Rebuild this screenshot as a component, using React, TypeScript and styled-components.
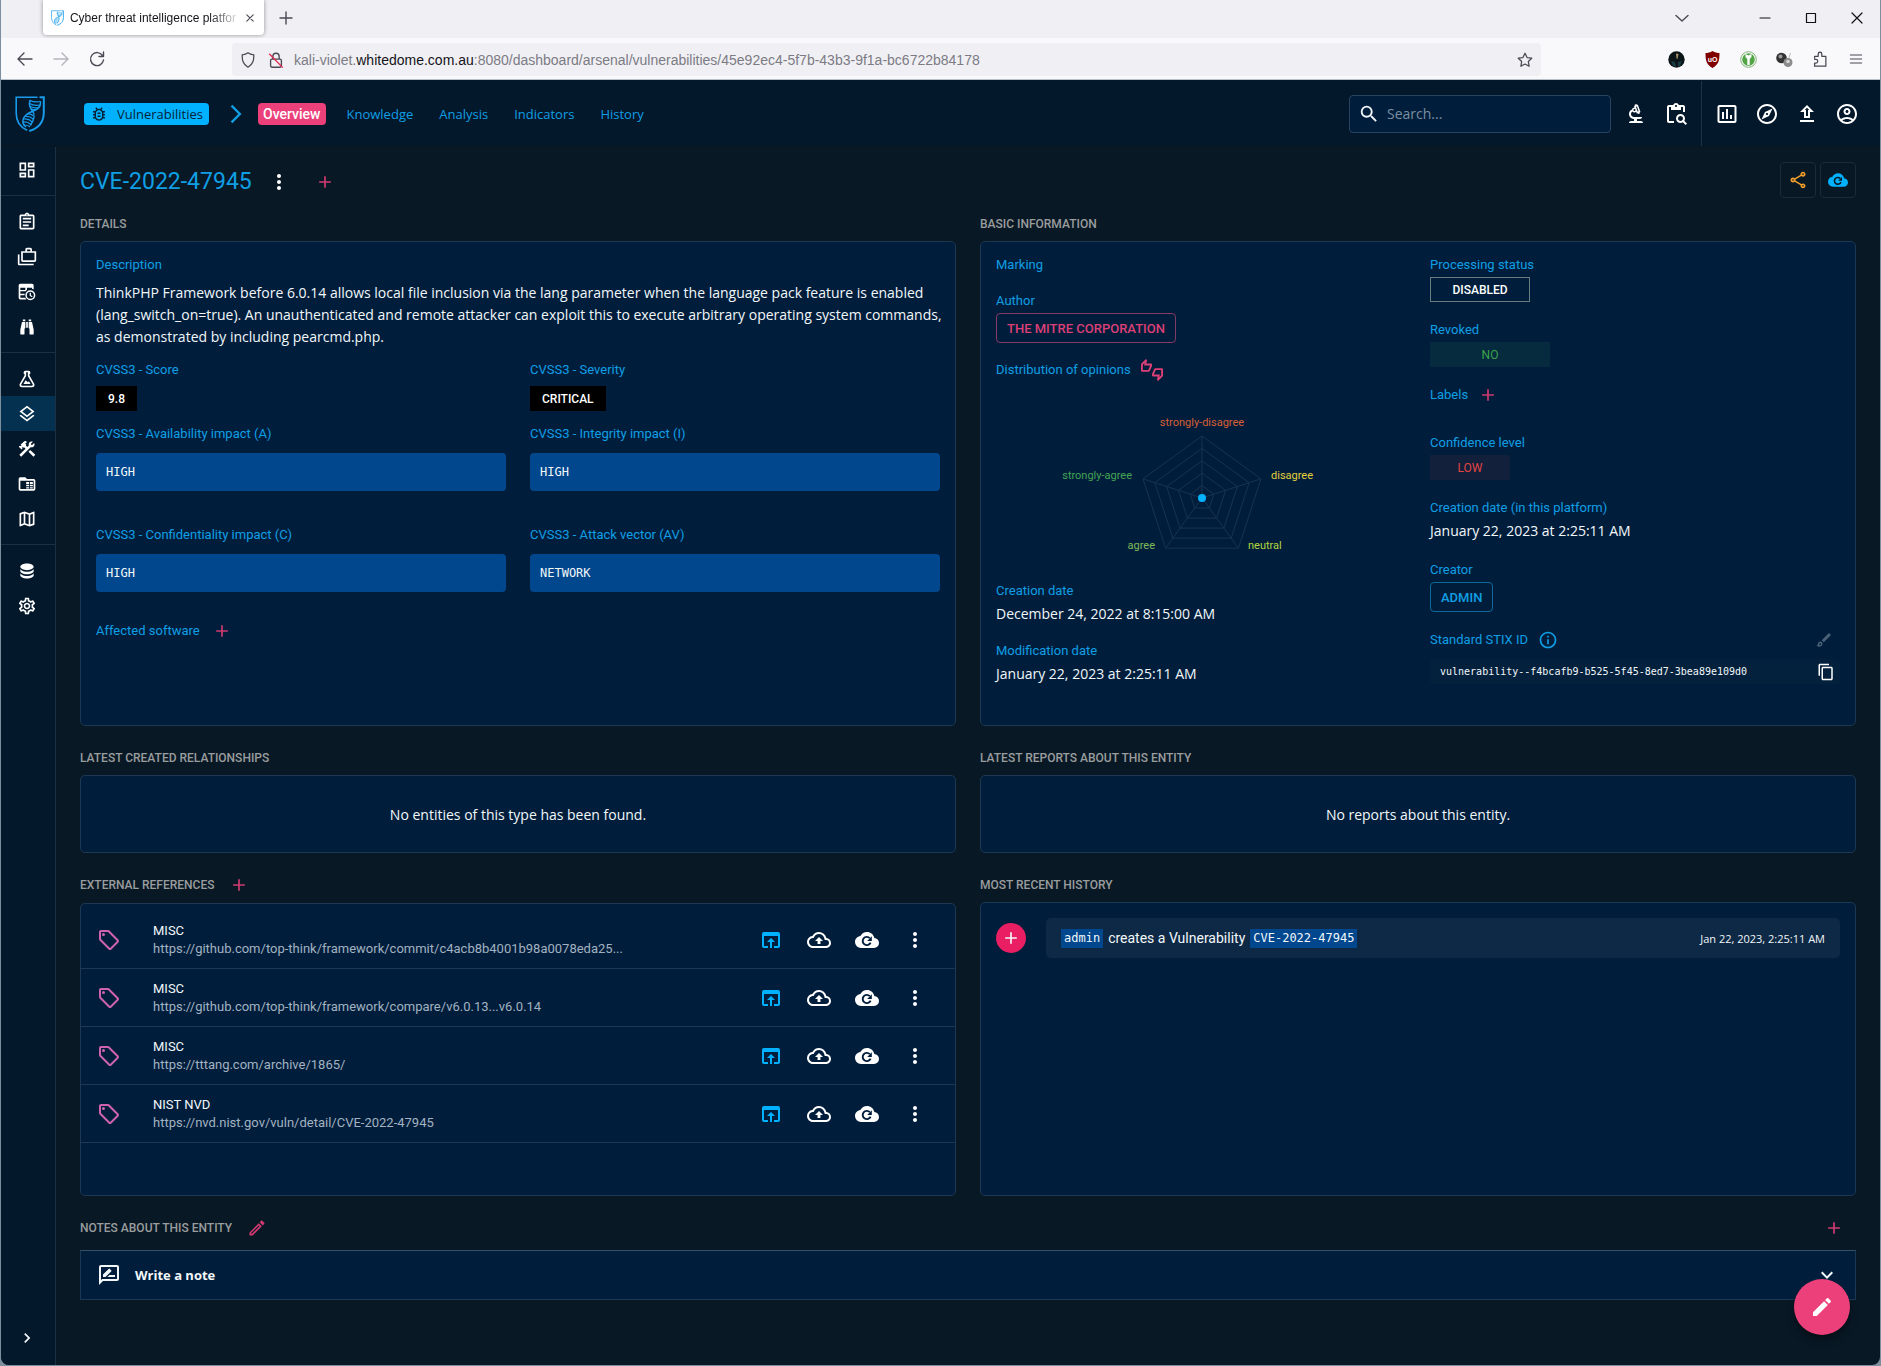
import React from 'react';
import styled, { createGlobalStyle, css } from 'styled-components';
import {
  MdAdd, MdArrowForwardIos, MdChevronRight, MdConstruction, MdContentCopy, MdContentPasteSearch, MdCreate,
  MdExpandMore, MdInsertChartOutlined, MdMoreVert, MdOpenInBrowser, MdOutlineAccountCircle, MdOutlineAssignment,
  MdOutlineBiotech, MdOutlineBrush, MdOutlineBugReport, MdOutlineCases, MdOutlineCloudUpload, MdOutlineCreate,
  MdOutlineDashboard, MdOutlineExplore, MdOutlineInfo, MdOutlineLayers, MdOutlineLocalOffer, MdOutlineMap,
  MdOutlineRateReview, MdOutlineSettings, MdOutlineShare, MdOutlineThumbsUpDown, MdOutlineUpload, MdSearch,
} from 'react-icons/md';

const c = {
  body: '#081825',
  nav: '#04182c',
  paper: '#001e3c',
  line: '#1c3852',
  primary: '#00b1ff',
  label: '#109fe4',
  pink: '#ec407a',
  pinkSoft: '#d03a70',
  code: '#01478d',
  heading: '#9a9d9d',
  text: '#f2f7fa',
};
const ui = `Roboto, "Liberation Sans", sans-serif`;
const body = `"Open Sans", Roboto, sans-serif`;
const mono = `"DejaVu Sans Mono", "Liberation Mono", monospace`;
const chrome = `"Liberation Sans", Arial, sans-serif`;

const Global = createGlobalStyle`
  *, *::before, *::after { box-sizing: border-box; }
  body { margin: 0; background: #7d8f9d; font-family: ${ui}; color: ${c.text}; }
  button { font: inherit; color: inherit; background: none; border: 0; padding: 0; cursor: pointer; }
  a { color: inherit; text-decoration: none; }
  h1, h2, h3, p, ul, dl, dd { margin: 0; padding: 0; }
  ul { list-style: none; }
  svg { display: block; }
`;

/* ---------- browser frame ---------- */
const Window = styled.div`
  display: flex;
  flex-direction: column;
  min-height: calc(100vh - 1px);
  margin: 0 1px 1px;
  border-radius: 0 0 8px 8px;
  overflow: hidden;
  background: ${c.body};
`;
const TabStrip = styled.header`
  display: flex;
  align-items: flex-start;
  height: 38px;
  padding-left: 42px;
  background: #f0f0f4;
  color: #3a3944;
  font: 12px ${chrome};
`;
const BrowserTab = styled.div`
  display: flex;
  align-items: center;
  gap: 6px;
  width: 221px;
  height: 35px;
  padding: 0 6px 0 8px;
  border-radius: 0 0 4px 4px;
  background: #fff;
  box-shadow: 0 0 4px rgba(0, 0, 0, 0.4);
  color: #15141a;
`;
const TabTitle = styled.span`
  flex: 1;
  white-space: nowrap;
  mask-image: linear-gradient(to right, #000 84%, rgba(0, 0, 0, 0.15));
`;
const ChromeButton = styled.button<{ $w?: number; $dim?: boolean }>`
  display: flex;
  flex: none;
  align-items: center;
  justify-content: center;
  width: ${(p) => p.$w ?? 36}px;
  height: 35px;
  color: ${(p) => (p.$dim ? '#b4b4ba' : '#4a4954')};
`;
const WindowControls = styled.div`
  display: flex;
  margin-left: auto;
  color: #111;
  button:first-child { margin-right: 40px; }
`;
const Toolbar = styled.div`
  display: flex;
  align-items: center;
  height: 42px;
  padding: 1px 6px 0;
  background: #f9f9fb;
  border-bottom: 1px solid #b6c0c8;
`;
const AddressBar = styled.div`
  display: flex;
  align-items: center;
  flex: 1;
  height: 33px;
  margin: 0 117px;
  padding: 2px 4px 0 2px;
  border-radius: 4px;
  background: #f0f0f4;
  color: #7c7b84;
  font: 14px ${chrome};
  b { font-weight: 400; color: #15141a; }
  span { flex: 1; padding-left: 4px; }
`;

const Line = ({ d, s = 20, w = 1.4, color = 'currentColor' }: { d: string; s?: number; w?: number; color?: string }) => (
  <svg width={s} height={s} viewBox="0 0 20 20" fill="none" stroke={color} strokeWidth={w} strokeLinecap="round" strokeLinejoin="round"><path d={d} /></svg>
);

const Logo = ({ w, h }: { w: number; h: number }) => (
  <svg width={w} height={h} viewBox="0 0 30 36" fill="none" stroke="#189bea" strokeLinecap="round">
    <path d="M22 1.2H1.200V17c0 9 5 14.500 10.500 17" strokeWidth="1.6" />
    <path d="M15 34.800c9-3 13.600-8.500 13.800-17.800V1.200h-3.500" strokeWidth="2" />
    <path d="M25.500 6.500c0 4.500-2.500 7-7 8.500s-9.500 4-10.500 9c-.5 3 .5 5 2.500 6.500" strokeWidth="1.500" />
    <path d="M15 4.500c-1.500 4 0 7.500 2.500 10.500s2 8.500-2 14" strokeWidth="1.500" />
    <path d="M15 4.500c3 1.500 6 2 10.500 1M14.500 7.500c3.500 2 7 2.200 10.500 1.500M15.500 10.500c3 1.500 5.500 1.800 8 .8M17 13c2 .8 3 .8 4.500.2M12.500 18c2-.5 3.500 0 5.500 1.500M10 20.500c3-.5 6 .5 8 2.500M8.500 23c3-.5 6.500.8 8.800 3M8 26c3-.5 6 .8 8 2.500M9 29c2 0 4 .2 5.500 1.500" strokeWidth="1.200" />
  </svg>
);

/* ---------- drawn icons ---------- */
const Glyph = ({ d, size = 20 }: { d: string; size?: number }) => (
  <svg width={size} height={size} viewBox="0 0 24 24" fill="currentColor" fillRule="evenodd"><path d={d} /></svg>
);
const FLASK = 'M5 19a1 1 0 0 0 1 1h12a1 1 0 0 0 1-1c0-.21-.07-.41-.18-.57L13 8.350V4h-2v4.350L5.180 18.430C5.070 18.590 5 18.790 5 19M6 22a3 3 0 0 1-3-3c0-.6.18-1.160.5-1.630L9 7.810V6a1 1 0 0 1-1-1V4a2 2 0 0 1 2-2h4a2 2 0 0 1 2 2v1a1 1 0 0 1-1 1v1.810l5.500 9.560c.32.47.5 1.030.5 1.630a3 3 0 0 1-3 3H6m7-6 1.340-1.340L16.270 18H7.730l2.660-4.610L13 16';
const DATABASE = 'M12 3C7.580 3 4 4.790 4 7s3.580 4 8 4 8-1.790 8-4-3.580-4-8-4M4 9v3c0 2.210 3.580 4 8 4s8-1.790 8-4V9c0 2.210-3.580 4-8 4s-8-1.790-8-4m0 5v3c0 2.210 3.580 4 8 4s8-1.790 8-4v-3c0 2.210-3.580 4-8 4s-8-1.790-8-4';
const BINOCULARS = 'M11 6h2v7h-2V6M9 20a1 1 0 0 1-1 1H5a1 1 0 0 1-1-1v-5l2-9h4v7a1 1 0 0 1-1 1v6m1-15H7V3h3v2m5 15v-6a1 1 0 0 1-1-1V6h4l2 9v5a1 1 0 0 1-1 1h-3a1 1 0 0 1-1-1M14 5V3h3v2h-3';
const FOLDER_TABLE = 'M20 6h-8l-2-2H4a2 2 0 0 0-2 2v12a2 2 0 0 0 2 2h16a2 2 0 0 0 2-2V8a2 2 0 0 0-2-2m0 12H4V8h16v10M11 9.500h3.500V12H11V9.500m4.500 0H19V12h-3.500V9.500M11 13h3.500v1.800H11V13m4.500 0H19v1.800h-3.500V13M11 15.800h3.500V17.500H11v-1.700m4.500 0H19v1.700h-3.500v-1.700';
const TABLE_CLOCK = 'M4 2h14a2 2 0 0 1 2 2v5.100a7 7 0 0 0-2-.9V7h-6v2.500A7 7 0 0 0 10.300 11H4v3h5.200a7 7 0 0 0-.1 2H4v3h5.900c.3.700.7 1.400 1.300 2H4a2 2 0 0 1-2-2V4a2 2 0 0 1 2-2m0 5v2.500h6V7H4M16 10a6 6 0 1 1 0 12 6 6 0 0 1 0-12m0 1.800a4.200 4.200 0 1 0 0 8.400 4.200 4.200 0 0 0 0-8.400m-.8 1.200h1.500v2.800l2 1.200-.7 1.300-2.800-1.700V13';

const CloudRefresh = ({ cut, size = 24 }: { cut: string; size?: number }) => (
  <svg width={size} height={size} viewBox="0 0 24 24">
    <path fill="currentColor" d="M19.350 10.030C18.670 6.590 15.640 4 12 4 9.110 4 6.600 5.640 5.350 8.030 2.340 8.360 0 10.900 0 14a6 6 0 0 0 6 6h13a5 5 0 0 0 5-5c0-2.640-2.050-4.780-4.650-4.970" />
    <path fill="none" stroke={cut} strokeWidth="1.900" d="M15.600 14.600A4.100 4.100 0 1 1 14.800 10.200" />
    <path fill={cut} d="M16.800 8.300v4.600h-4.600z" />
  </svg>
);

/* ---------- application shell ---------- */
const TopBar = styled.header`
  display: flex;
  align-items: center;
  height: 67px;
  padding: 1px 13px 0 14px;
  border-bottom: 1px solid #0a1520;
  background: ${c.nav};
  font-family: ${body};
  font-size: 13px;
`;
const Crumb = styled.a`
  display: flex;
  align-items: center;
  gap: 9px;
  height: 22px;
  margin-left: 39px;
  padding: 0 6px;
  border-radius: 4px;
  background: ${c.primary};
  color: #04233a;
`;
const CrumbArrow = styled.span`
  margin: 0 11px 0 16px;
  color: #109fe4;
`;
const Tabs = styled.nav`
  display: flex;
  gap: 16px;
`;
const TabLink = styled.a<{ $active?: boolean }>`
  height: 22px;
  padding: 0 5px;
  border-radius: 4px;
  line-height: 22px;
  color: ${c.label};
  ${(p) => p.$active && css`
    background: ${c.pink};
    color: #fff;
    font-family: ${ui};
    font-size: 14px;
    font-weight: 500;
  `}
`;
const SearchBox = styled.label`
  display: flex;
  align-items: center;
  gap: 5px;
  width: 262px;
  height: 38px;
  margin: 0 5px 0 auto;
  padding: 0 8px;
  border: 1px solid #28445f;
  border-radius: 4px;
  background: ${c.paper};
  input {
    flex: 1;
    min-width: 0;
    border: 0;
    outline: 0;
    background: none;
    color: ${c.text};
    font: 14px ${body};
  }
  input::placeholder { color: #7b8ea1; opacity: 1; }
`;
const TopIcon = styled.button`
  display: grid;
  place-items: center;
  width: 40px;
  height: 40px;
  color: #fff;
`;
const TopDivider = styled.span`
  align-self: stretch;
  width: 1px;
  margin: 0 5px;
  background: #1f3346;
`;
const Shell = styled.div`
  display: flex;
  flex: 1;
`;
const SideNav = styled.nav`
  display: flex;
  flex-direction: column;
  flex: none;
  width: 55px;
  border-right: 1px solid #1c3044;
  background: ${c.nav};
`;
const SideGroup = styled.ul`
  padding: 8px 0;
  border-bottom: 1px solid #1c3044;
  &:first-child { padding-top: 5px; }
  &:last-of-type { border-bottom: 0; }
`;
const SideItem = styled.a<{ $active?: boolean }>`
  display: grid;
  place-items: center;
  height: 35px;
  padding-right: 2px;
  color: #fff;
  background: ${(p) => (p.$active ? '#04314f' : 'transparent')};
`;
const SideToggle = styled.button`
  display: grid;
  place-items: center;
  height: 35px;
  margin: auto 0 10px;
  padding-right: 2px;
`;

/* ---------- page parts ---------- */
const Main = styled.main`
  flex: 1;
  min-width: 0;
  padding: 15px 24px;
`;
const TitleRow = styled.div`
  display: flex;
  align-items: center;
  height: 40px;
  margin-bottom: 12px;
`;
const Title = styled.h1`
  font: 400 23px/40px ${ui};
  color: ${c.label};
`;
const IconButton = styled.button<{ $color?: string; $gap?: number }>`
  display: grid;
  place-items: center;
  margin-left: ${(p) => p.$gap ?? 0}px;
  color: ${(p) => p.$color ?? '#fff'};
`;
const ToggleGroup = styled.div`
  display: flex;
  align-self: flex-start;
  gap: 4px;
  margin-left: auto;
`;
const ToggleButton = styled.button<{ $color: string }>`
  display: grid;
  place-items: center;
  width: 36px;
  height: 36px;
  border: 1px solid #1a2b3b;
  border-radius: 4px;
  color: ${(p) => p.$color};
`;
const Grid = styled.div`
  display: grid;
  grid-template-columns: 1fr 1fr;
  gap: 22px 24px;
`;
const Section = styled.section<{ $wide?: boolean }>`
  display: flex;
  flex-direction: column;
  min-width: 0;
  ${(p) => p.$wide && css`grid-column: 1 / -1;`}
`;
const SectionHead = styled.div<{ $space?: number }>`
  display: flex;
  align-items: center;
  height: 20px;
  margin-bottom: ${(p) => p.$space ?? 7}px;
`;
const HeadEnd = styled.div`
  margin-left: auto;
  padding-right: 12px;
`;
const Heading = styled.h2`
  font: 500 12px/20px ${ui};
  text-transform: uppercase;
  color: ${c.heading};
`;
const Card = styled.div<{ $min: number }>`
  flex: 1;
  min-height: ${(p) => p.$min}px;
  border: 1px solid ${c.line};
  border-radius: 5px;
  background: ${c.paper};
`;
const DetailsCard = styled(Card)`
  padding: 13px 15px;
`;
const InfoCard = styled(Card)`
  display: grid;
  grid-template-columns: 1fr 1fr;
  gap: 24px;
  align-items: start;
  padding: 13px 15px;
`;
const EmptyCard = styled(Card)`
  display: grid;
  place-items: center;
  padding-top: 2px;
  font: 14px/22px ${body};
`;
const ListCard = styled(Card)`
  padding-top: 7px;
`;
const FieldRow = styled.div<{ $top: number }>`
  display: grid;
  grid-template-columns: 1fr 1fr;
  gap: 24px;
  margin-top: ${(p) => p.$top}px;
`;
const FieldStack = styled.div<{ $gap: number }>`
  display: flex;
  flex-direction: column;
  gap: ${(p) => p.$gap}px;
`;
const Field = styled.div<{ $min?: number }>`
  min-height: ${(p) => p.$min ?? 0}px;
`;
const LabelRow = styled.div<{ $top?: number }>`
  display: flex;
  align-items: center;
  height: 20px;
  margin-top: ${(p) => p.$top ?? 0}px;
`;
const Label = styled.h3`
  font: 400 13px/20px ${ui};
  color: ${c.label};
`;
const Description = styled.p`
  margin: 7px 0 12px;
  font: 14px/22px ${body};
  white-space: pre;
`;
const ScoreChip = styled.span`
  display: flex;
  align-items: center;
  width: fit-content;
  height: 25px;
  margin-top: 6px;
  padding: 0 12px;
  background: #000;
  font: 500 12px ${ui};
  color: #fff;
`;
const CodeBox = styled.pre`
  margin: 9px 0 0;
  padding: 0 10px;
  border-radius: 4px;
  background: ${c.code};
  font: 12px/38px ${mono};
`;
const Value = styled.p`
  margin-top: 2px;
  font: 14px/22px ${body};
`;
const OutlineButton = styled.button<{ $tone: string; $edge: string }>`
  display: block;
  height: 30px;
  margin-top: 2px;
  padding: 0 10px;
  border: 1px solid ${(p) => p.$edge};
  border-radius: 4px;
  font: 500 13px ${ui};
  color: ${(p) => p.$tone};
`;
const Chip = styled.span<{ $w: number; $tone: string; $bg?: string; $edge?: string }>`
  display: flex;
  align-items: center;
  justify-content: center;
  width: ${(p) => p.$w}px;
  height: 25px;
  margin-top: 2px;
  border: 1px solid ${(p) => p.$edge ?? 'transparent'};
  background: ${(p) => p.$bg ?? 'transparent'};
  font: ${(p) => (p.$edge ? 500 : 400)} 12px ${ui};
  color: ${(p) => p.$tone};
`;
const ChartBox = styled.div`
  height: 185px;
  display: flex;
  justify-content: center;
`;
const StixId = styled.div`
  display: flex;
  align-items: center;
  justify-content: space-between;
  height: 25px;
  margin-top: 9px;
  padding: 0 5px 0 10px;
  border-radius: 4px;
  background: #03213d;
  font: 10px ${mono};
`;
const LabelEnd = styled.span`
  margin-left: auto;
  padding-right: 7px;
  color: #4a6178;
`;

const Ref = styled.li`
  display: flex;
  align-items: center;
  height: 58px;
  padding: 0 16px;
  border-bottom: 1px solid ${c.line};
`;
const RefIcon = styled.span`
  margin-right: 32px;
  color: #cf63b0;
`;
const RefText = styled.a`
  flex: 1;
  min-width: 0;
  font: 13px/18px ${ui};
  color: #a3b2c0;
  strong {
    display: block;
    font-weight: 400;
    color: ${c.text};
  }
`;
const RefAction = styled.button<{ $color?: string }>`
  display: grid;
  place-items: center;
  width: 48px;
  height: 48px;
  color: ${(p) => p.$color ?? '#fff'};
`;

const HistoryRow = styled.div`
  display: flex;
  align-items: center;
  gap: 20px;
  padding: 15px;
`;
const HistoryDot = styled.span`
  display: grid;
  place-items: center;
  flex: none;
  width: 30px;
  height: 30px;
  border-radius: 50%;
  background: #e91e63;
`;
const HistoryText = styled.p`
  display: flex;
  align-items: center;
  gap: 5px;
  flex: 1;
  height: 40px;
  padding: 0 15px;
  border-radius: 5px;
  background: #0e2945;
  font: 14px ${ui};
  time { margin-left: auto; font: 11px ${body}; }
`;
const Code = styled.code`
  padding: 0 3px;
  background: ${c.code};
  font: 12px/19px ${mono};
`;

const NoteToggle = styled.button`
  display: flex;
  align-items: center;
  gap: 14px;
  width: 100%;
  height: 50px;
  padding: 0 16px;
  border: 1px solid ${c.line};
  border-top-color: #34506b;
  background: ${c.paper};
  font: 700 13px ${body};
  svg:last-child { margin-left: auto; }
`;
const Fab = styled.button`
  position: fixed;
  right: 31px;
  bottom: 31px;
  display: grid;
  place-items: center;
  width: 56px;
  height: 56px;
  border-radius: 50%;
  background: ${c.pink};
  color: #fff;
  box-shadow: 0 3px 5px -1px rgba(0, 0, 0, 0.3), 0 6px 10px rgba(0, 0, 0, 0.25);
`;

/* ---------- radar ---------- */
const RADIUS = 62;
const vertex = (i: number, r: number) => {
  const a = -Math.PI / 2 + (i * 2 * Math.PI) / 5;
  return [206 + r * Math.cos(a), 118 + r * Math.sin(a)] as const;
};
const ring = (r: number) => [0, 1, 2, 3, 4].map((i) => vertex(i, r).join(',')).join(' ');
const opinions = [
  { name: 'strongly-disagree', x: 206, y: 46, anchor: 'middle', fill: '#d95f35' },
  { name: 'disagree', x: 275, y: 99, anchor: 'start', fill: '#e3cf3a' },
  { name: 'neutral', x: 252, y: 169, anchor: 'start', fill: '#b4d43c' },
  { name: 'agree', x: 159, y: 169, anchor: 'end', fill: '#7fb95a' },
  { name: 'strongly-agree', x: 136, y: 99, anchor: 'end', fill: '#43a352' },
] as const;
const Radar = () => (
  <svg width="410" height="183" viewBox="0 0 410 183" role="img" aria-label="Distribution of opinions">
    <g fill="none" stroke="#17344e">
      {[1, 2, 3, 4, 5].map((k) => <polygon key={k} points={ring((RADIUS * k) / 5)} />)}
      {[0, 1, 2, 3, 4].map((i) => {
        const [x, y] = vertex(i, RADIUS);
        return <line key={i} x1="206" y1="118" x2={x} y2={y} />;
      })}
    </g>
    <circle cx="206" cy="118" r="4" fill={c.primary} />
    <g fontFamily="Roboto, sans-serif" fontSize="11">
      {opinions.map((o) => <text key={o.name} x={o.x} y={o.y} textAnchor={o.anchor} fill={o.fill}>{o.name}</text>)}
    </g>
  </svg>
);

/* ---------- data ---------- */
const sideGroups = [
  [{ name: 'Dashboard', icon: <MdOutlineDashboard size={20} /> }],
  [
    { name: 'Analysis', icon: <MdOutlineAssignment size={20} /> },
    { name: 'Cases', icon: <MdOutlineCases size={20} /> },
    { name: 'Events', icon: <Glyph d={TABLE_CLOCK} /> },
    { name: 'Observations', icon: <Glyph d={BINOCULARS} /> },
  ],
  [
    { name: 'Threats', icon: <Glyph d={FLASK} /> },
    { name: 'Arsenal', icon: <MdOutlineLayers size={20} />, active: true },
    { name: 'Techniques', icon: <MdConstruction size={20} /> },
    { name: 'Entities', icon: <Glyph d={FOLDER_TABLE} /> },
    { name: 'Locations', icon: <MdOutlineMap size={20} /> },
  ],
  [
    { name: 'Data', icon: <Glyph d={DATABASE} /> },
    { name: 'Settings', icon: <MdOutlineSettings size={20} /> },
  ],
];
const references = [
  { name: 'MISC', url: 'https://github.com/top-think/framework/commit/c4acb8b4001b98a0078eda25...' },
  { name: 'MISC', url: 'https://github.com/top-think/framework/compare/v6.0.13...v6.0.14' },
  { name: 'MISC', url: 'https://tttang.com/archive/1865/' },
  { name: 'NIST NVD', url: 'https://nvd.nist.gov/vuln/detail/CVE-2022-47945' },
];
const impacts = [
  [['CVSS3 - Availability impact (A)', 'HIGH'], ['CVSS3 - Integrity impact (I)', 'HIGH']],
  [['CVSS3 - Confidentiality impact (C)', 'HIGH'], ['CVSS3 - Attack vector (AV)', 'NETWORK']],
];
const description = `ThinkPHP Framework before 6.0.14 allows local file inclusion via the lang parameter when the language pack feature is enabled
(lang_switch_on=true). An unauthenticated and remote attacker can exploit this to execute arbitrary operating system commands,
as demonstrated by including pearcmd.php.`;

const BrowserChrome = () => (
  <>
    <TabStrip>
      <BrowserTab>
        <Logo w={16} h={18} />
        <TabTitle>Cyber threat intelligence platfor</TabTitle>
        <ChromeButton $w={16} aria-label="Close tab"><Line d="M6 6l8 8M14 6l-8 8" s={18} /></ChromeButton>
      </BrowserTab>
      <ChromeButton $w={44} aria-label="New tab"><Line d="M10 4v12M4 10h12" /></ChromeButton>
      <WindowControls>
        <ChromeButton $w={40} aria-label="List tabs"><Line d="M4 7.500l6 5.500 6-5.500" /></ChromeButton>
        <ChromeButton $w={46} aria-label="Minimise"><Line d="M5 10h10" w={1.2} color="#111" /></ChromeButton>
        <ChromeButton $w={46} aria-label="Maximise"><Line d="M5.500 5.500h9v9h-9z" w={1.2} color="#111" /></ChromeButton>
        <ChromeButton $w={46} aria-label="Close"><Line d="M5 5l10 10M15 5L5 15" w={1.2} color="#111" /></ChromeButton>
      </WindowControls>
    </TabStrip>
    <Toolbar>
      <ChromeButton aria-label="Back"><Line d="M17 10H3.500M9 4l-6 6 6 6" /></ChromeButton>
      <ChromeButton $dim aria-label="Forward"><Line d="M3 10h13.500M11 4l6 6-6 6" /></ChromeButton>
      <ChromeButton aria-label="Reload"><Line d="M15.500 6.500A6.500 6.500 0 1 0 16.500 11M16.500 3v4.500H12" /></ChromeButton>
      <AddressBar>
        <ChromeButton $w={28} aria-label="Protection"><Line d="M10 2c2 1.500 4 2 6.500 2.300 0 6-.5 10-6.500 13.700C4 14.300 3.500 10.300 3.500 4.300 6 4 8 3.500 10 2z" s={18} /></ChromeButton>
        <ChromeButton $w={28} aria-label="Connection not secure">
          <svg width="18" height="18" viewBox="0 0 20 20" fill="none" stroke="#4a4954" strokeWidth="1.500">
            <rect x="4" y="9" width="12" height="9" rx="1.500" /><path d="M6.500 9V6a3.500 3.500 0 0 1 7 0v3" />
            <path d="M2.500 3l15 15.500" stroke="#e22850" />
          </svg>
        </ChromeButton>
        <span>kali-violet.<b>whitedome.com.au</b>:8080/dashboard/arsenal/vulnerabilities/45e92ec4-5f7b-43b3-9f1a-bc6722b84178</span>
        <ChromeButton $w={24} aria-label="Bookmark"><Line d="M10 2.500l2.300 4.800 5.200.7-3.800 3.700.9 5.300-4.600-2.500L5.400 17l.9-5.300L2.500 8l5.200-.7z" s={18} /></ChromeButton>
      </AddressBar>
      <ChromeButton aria-label="Account">
        <svg width="17" height="17" viewBox="0 0 17 17"><circle cx="8.500" cy="8.500" r="8.200" fill="#0b1518" /><path d="M8 2.500l2.500.5-1 5-1-.5z" fill="#a8936b" /><path d="M3 10l4 1 1 5-3-1zM10 11l4-1-2 5-2 1z" fill="#173c44" /></svg>
      </ChromeButton>
      <ChromeButton aria-label="uBlock">
        <svg width="17" height="17" viewBox="0 0 17 17"><path d="M8.500 0C11 1.500 13 2 15.500 2c0 8-1 11.500-7 15C2.500 13.500 1.500 10 1.500 2 4 2 6 1.500 8.500 0z" fill="#800000" /><text x="8.500" y="10.500" fontSize="7" fontWeight="700" fontFamily="Liberation Sans, sans-serif" fill="#fff" textAnchor="middle">uO</text></svg>
      </ChromeButton>
      <ChromeButton aria-label="Password manager">
        <svg width="17" height="17" viewBox="0 0 17 17"><circle cx="8.500" cy="8.500" r="7.800" fill="#fff" stroke="#7fae76" /><circle cx="8.500" cy="8.500" r="6.300" fill="#52a447" /><path d="M5.500 3l3 1.500 3-1.500v3L9.700 8v6H7.300V8L5.500 6z" fill="#fff" /></svg>
      </ChromeButton>
      <ChromeButton aria-label="Containers">
        <svg width="17" height="17" viewBox="0 0 17 17"><path d="M14.500 2l-2 6" stroke="#bbb" /><circle cx="5.500" cy="7" r="5.300" fill="#333" /><circle cx="4.500" cy="5.500" r="2" fill="#999" /><circle cx="12" cy="11.500" r="4.500" fill="#8c8c8c" /><circle cx="12" cy="10.500" r="1.800" fill="#d8d8d8" /></svg>
      </ChromeButton>
      <ChromeButton aria-label="Extensions"><Line d="M4 9V7h4V4.500a2 2 0 0 1 4 0V7h4.500v11H4v-3.500h1.500a2 2 0 0 0 0-4H4" s={18} /></ChromeButton>
      <ChromeButton aria-label="Menu"><Line d="M3 5h14M3 10h14M3 15h14" s={16} /></ChromeButton>
    </Toolbar>
  </>
);

const PlusButton = ({ label, gap }: { label: string; gap?: number }) => (
  <IconButton $color={c.pinkSoft} $gap={gap} aria-label={label}><MdAdd size={20} /></IconButton>
);

export default function App() {
  return (
    <Window>
      <Global />
      <BrowserChrome />
      <TopBar>
        <a href="#home" aria-label="Home"><Logo w={30} h={36} /></a>
        <Crumb href="#vulnerabilities"><MdOutlineBugReport size={18} />Vulnerabilities</Crumb>
        <CrumbArrow><MdArrowForwardIos size={22} /></CrumbArrow>
        <Tabs>
          <TabLink href="#overview" $active>Overview</TabLink>
          <TabLink href="#knowledge">Knowledge</TabLink>
          <TabLink href="#analysis">Analysis</TabLink>
          <TabLink href="#indicators">Indicators</TabLink>
          <TabLink href="#history">History</TabLink>
        </Tabs>
        <SearchBox>
          <MdSearch size={22} />
          <input type="text" placeholder="Search..." aria-label="Search" />
        </SearchBox>
        <TopIcon aria-label="Advanced search"><MdOutlineBiotech size={24} /></TopIcon>
        <TopIcon aria-label="Bulk search"><MdContentPasteSearch size={24} /></TopIcon>
        <TopDivider />
        <TopIcon aria-label="Custom dashboards"><MdInsertChartOutlined size={24} /></TopIcon>
        <TopIcon aria-label="Investigations"><MdOutlineExplore size={24} /></TopIcon>
        <TopIcon aria-label="Data import"><MdOutlineUpload size={24} /></TopIcon>
        <TopIcon aria-label="Profile"><MdOutlineAccountCircle size={24} /></TopIcon>
      </TopBar>
      <Shell>
        <SideNav>
          {sideGroups.map((group, g) => (
            <SideGroup key={g}>
              {group.map((item: { name: string; icon: React.ReactNode; active?: boolean }) => (
                <li key={item.name}><SideItem href={`#${item.name.toLowerCase()}`} aria-label={item.name} $active={item.active}>{item.icon}</SideItem></li>
              ))}
            </SideGroup>
          ))}
          <SideToggle aria-label="Expand menu"><MdChevronRight size={20} /></SideToggle>
        </SideNav>
        <Main>
          <TitleRow>
            <Title>CVE-2022-47945</Title>
            <IconButton $gap={15} aria-label="More"><MdMoreVert size={24} /></IconButton>
            <PlusButton label="Add alias" gap={24} />
            <ToggleGroup>
              <ToggleButton $color="#f5a02a" aria-label="Share"><MdOutlineShare size={20} /></ToggleButton>
              <ToggleButton $color={c.primary} aria-label="Enrichment"><CloudRefresh cut={c.body} size={20} /></ToggleButton>
            </ToggleGroup>
          </TitleRow>

          <Grid>
            <Section>
              <SectionHead><Heading>Details</Heading></SectionHead>
              <DetailsCard $min={485}>
                <Label>Description</Label>
                <Description>{description}</Description>
                <FieldRow $top={0}>
                  <div><Label>CVSS3 - Score</Label><ScoreChip>9.8</ScoreChip></div>
                  <div><Label>CVSS3 - Severity</Label><ScoreChip>CRITICAL</ScoreChip></div>
                </FieldRow>
                {impacts.map((row, i) => (
                  <FieldRow key={i} $top={i ? 34 : 13}>
                    {row.map(([name, value]) => (
                      <div key={name}><Label>{name}</Label><CodeBox>{value}</CodeBox></div>
                    ))}
                  </FieldRow>
                ))}
                <LabelRow $top={29}><Label>Affected software</Label><PlusButton label="Add software" gap={12} /></LabelRow>
              </DetailsCard>
            </Section>

            <Section>
              <SectionHead><Heading>Basic information</Heading></SectionHead>
              <InfoCard $min={485}>
                <FieldStack $gap={16}>
                  <Field><Label>Marking</Label></Field>
                  <Field>
                    <Label>Author</Label>
                    <OutlineButton $tone="#dd3f76" $edge="#843a67">THE MITRE CORPORATION</OutlineButton>
                  </Field>
                  <Field>
                    <LabelRow $top={1}>
                      <Label>Distribution of opinions</Label>
                      <IconButton $color="#dd3f76" $gap={10} aria-label="Give an opinion"><MdOutlineThumbsUpDown size={22} /></IconButton>
                    </LabelRow>
                    <ChartBox><Radar /></ChartBox>
                  </Field>
                  <Field><Label>Creation date</Label><Value>December 24, 2022 at 8:15:00 AM</Value></Field>
                  <Field><Label>Modification date</Label><Value>January 22, 2023 at 2:25:11 AM</Value></Field>
                </FieldStack>
                <FieldStack $gap={18}>
                  <Field><Label>Processing status</Label><Chip $w={100} $tone="#fff" $edge="#6a7c80">DISABLED</Chip></Field>
                  <Field><Label>Revoked</Label><Chip $w={120} $tone="#3da34c" $bg="#062a3e">NO</Chip></Field>
                  <Field $min={30}>
                    <LabelRow><Label>Labels</Label><PlusButton label="Add label" gap={10} /></LabelRow>
                  </Field>
                  <Field><Label>Confidence level</Label><Chip $w={80} $tone="#e0453f" $bg="#12203c">LOW</Chip></Field>
                  <Field><Label>Creation date (in this platform)</Label><Value>January 22, 2023 at 2:25:11 AM</Value></Field>
                  <Field>
                    <Label>Creator</Label>
                    <OutlineButton $tone={c.label} $edge="#0b6a98">ADMIN</OutlineButton>
                  </Field>
                  <Field>
                    <LabelRow>
                      <Label>Standard STIX ID</Label>
                      <IconButton $color={c.label} $gap={10} aria-label="About this ID"><MdOutlineInfo size={20} /></IconButton>
                      <LabelEnd><MdOutlineBrush size={18} /></LabelEnd>
                    </LabelRow>
                    <StixId>
                      vulnerability--f4bcafb9-b525-5f45-8ed7-3bea89e109d0
                      <IconButton aria-label="Copy"><MdContentCopy size={18} /></IconButton>
                    </StixId>
                  </Field>
                </FieldStack>
              </InfoCard>
            </Section>

            <Section>
              <SectionHead><Heading>Latest created relationships</Heading></SectionHead>
              <EmptyCard $min={78}>No entities of this type has been found.</EmptyCard>
            </Section>
            <Section>
              <SectionHead><Heading>Latest reports about this entity</Heading></SectionHead>
              <EmptyCard $min={78}>No reports about this entity.</EmptyCard>
            </Section>

            <Section>
              <SectionHead $space={8}><Heading>External references</Heading><PlusButton label="Add reference" gap={15} /></SectionHead>
              <ListCard as="ul" $min={293}>
                {references.map((r) => (
                  <Ref key={r.url}>
                    <RefIcon><MdOutlineLocalOffer size={24} /></RefIcon>
                    <RefText href="#reference"><strong>{r.name}</strong>{r.url}</RefText>
                    <RefAction $color={c.primary} aria-label="Browse"><MdOpenInBrowser size={24} /></RefAction>
                    <RefAction aria-label="Upload file"><MdOutlineCloudUpload size={24} /></RefAction>
                    <RefAction aria-label="Refresh"><CloudRefresh cut={c.paper} /></RefAction>
                    <RefAction aria-label="More"><MdMoreVert size={24} /></RefAction>
                  </Ref>
                ))}
              </ListCard>
            </Section>
            <Section>
              <SectionHead><Heading>Most recent history</Heading></SectionHead>
              <Card $min={294}>
                <HistoryRow>
                  <HistoryDot><MdAdd size={20} /></HistoryDot>
                  <HistoryText>
                    <Code>admin</Code> creates a Vulnerability <Code>CVE-2022-47945</Code>
                    <time>Jan 22, 2023, 2:25:11 AM</time>
                  </HistoryText>
                </HistoryRow>
              </Card>
            </Section>

            <Section $wide>
              <SectionHead $space={12}>
                <Heading>Notes about this entity</Heading>
                <IconButton $color={c.pinkSoft} $gap={15} aria-label="Edit notes"><MdOutlineCreate size={20} /></IconButton>
                <HeadEnd><PlusButton label="Add note" /></HeadEnd>
              </SectionHead>
              <NoteToggle><MdOutlineRateReview size={24} />Write a note<MdExpandMore size={24} /></NoteToggle>
            </Section>
          </Grid>
        </Main>
      </Shell>
      <Fab aria-label="Edit"><MdCreate size={24} /></Fab>
    </Window>
  );
}
